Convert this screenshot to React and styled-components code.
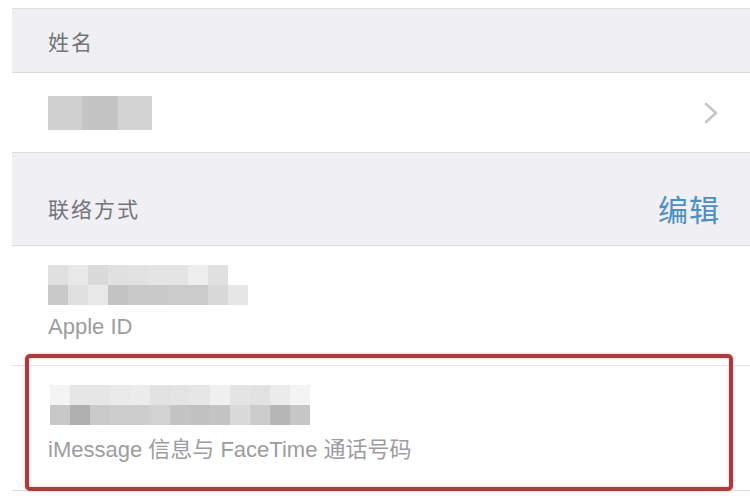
import styled, { createGlobalStyle } from 'styled-components'

const GlobalStyle = createGlobalStyle`
  html, body {
    margin: 0;
    padding: 0;
    background: #ffffff;
    font-family: "Liberation Sans", "Noto Sans CJK SC", sans-serif;
  }
`

const Page = styled.div`
  position: relative;
  width: 750px;
  height: 500px;
  overflow: hidden;
  background: #ffffff;
  padding-top: 8px;
  box-sizing: border-box;
`

const List = styled.div`
  margin-left: 12px;
  display: flex;
  flex-direction: column;
  border-top: 1px solid #dedee2;
`

const SectionHeader = styled.div`
  height: ${({ $height }) => $height}px;
  background: #f0f0f4;
  border-bottom: 1px solid #dcdce0;
  display: flex;
  align-items: center;
  justify-content: space-between;
  padding: ${({ $padTop }) => $padTop || 0}px 30px 0 36px;
  box-sizing: border-box;
`

const HeaderTitle = styled.span`
  font-family: "Noto Sans CJK SC", sans-serif;
  font-size: 21px;
  color: #737378;
  letter-spacing: 2px;
`

const EditLink = styled.span`
  font-family: "Noto Sans CJK SC", sans-serif;
  font-size: 30px;
  color: #4a8fc6;
  letter-spacing: 1px;
`

const NameRow = styled.div`
  height: 80px;
  background: #ffffff;
  border-bottom: 1px solid #dcdce0;
  display: flex;
  align-items: center;
  justify-content: space-between;
  padding: 0 32px 0 36px;
  box-sizing: border-box;
`

const ContactRow = styled.div`
  height: ${({ $height }) => $height}px;
  background: #ffffff;
  border-bottom: 1px solid ${({ $line }) => $line || '#e4e4e8'};
  display: flex;
  flex-direction: column;
  padding: 19px 0 0 36px;
  box-sizing: border-box;
`

const Mosaic = styled.div`
  display: flex;
  flex-direction: column;
  filter: blur(0.7px);
`

const MosaicRow = styled.div`
  display: flex;
  margin-left: ${({ $offset }) => $offset || 0}px;
  filter: ${({ $soft }) => ($soft ? 'blur(0.7px)' : 'none')};
`

const Tile = styled.div`
  width: ${({ $w }) => $w}px;
  height: ${({ $h }) => $h}px;
  background: ${({ $color }) => $color};
`

const SubLabel = styled.span`
  margin-top: ${({ $gap }) => $gap}px;
  font-family: "Liberation Sans", "Noto Sans CJK SC", sans-serif;
  font-size: 22px;
  line-height: 24px;
  color: #9c9ca0;
`

const BottomBand = styled.div`
  flex: 1;
  height: 20px;
  background: #f0f0f4;
`

const Highlight = styled.div`
  position: absolute;
  left: 25px;
  top: 354px;
  width: 708px;
  height: 137px;
  box-sizing: border-box;
  border: 4px solid #a83b3b;
  border-radius: 5px;
  box-shadow: 0 0 3px rgba(240, 120, 120, 0.6), inset 0 0 3px rgba(240, 120, 120, 0.5);
  pointer-events: none;
`

const nameTiles = [
  { w: 34, c: '#d0d0d0' },
  { w: 36, c: '#c4c4c4' },
  { w: 34, c: '#d3d3d3' },
]

const appleTop = ['#e0e0e0', '#e8e8e8', '#dadada', '#e0e0e0', '#e2e2e2', '#e4e4e4', '#e4e4e4', '#eeeeee', '#e0e0e0']
const appleBottom = ['#c9c9c9', '#e0e0e0', '#e8e8e8', '#c4c4c4', '#c9c9c9', '#c9c9c9', '#cbcbcb', '#cbcbcb', '#d8d8d8', '#e6e6e6']

const msgTop = ['#f4f4f4', '#e6e6e6', '#e6e6e6', '#eaeaea', '#ececec', '#e2e2e2', '#e4e4e4', '#e6e6e6', '#f0f0f0', '#e4e4e4', '#e2e2e2', '#ebebeb', '#f4f4f4']
const msgBottom = ['#c8c8c8', '#b0b0b0', '#cacaca', '#cdcdcd', '#cdcdcd', '#d2d2d2', '#c4c4c4', '#c0c0c0', '#c4c4c4', '#dadada', '#cccccc', '#b6b6b6', '#c6c6c6']

function Chevron() {
  return (
    <svg width="14" height="22" viewBox="0 0 14 22">
      <path d="M2 2 L12 11 L2 20" fill="none" stroke="#c5c5ca" strokeWidth="2.6" strokeLinecap="round" strokeLinejoin="round" />
    </svg>
  )
}

function TileRow({ colors, w, h, offset }) {
  return (
    <MosaicRow $offset={offset}>
      {colors.map((c, i) => (
        <Tile key={i} $w={w} $h={h} $color={c} />
      ))}
    </MosaicRow>
  )
}

export default function App() {
  return (
    <Page>
      <GlobalStyle />
      <List>
        <SectionHeader $height={64}>
          <HeaderTitle>姓名</HeaderTitle>
        </SectionHeader>

        <NameRow>
          <MosaicRow $soft>
            {nameTiles.map((t, i) => (
              <Tile key={i} $w={t.w} $h={34} $color={t.c} />
            ))}
          </MosaicRow>
          <Chevron />
        </NameRow>

        <SectionHeader $height={93} $padTop={18}>
          <HeaderTitle>联络方式</HeaderTitle>
          <EditLink>编辑</EditLink>
        </SectionHeader>

        <ContactRow $height={120}>
          <Mosaic>
            <TileRow colors={appleTop} w={20} h={20} />
            <TileRow colors={appleBottom} w={20} h={20} />
          </Mosaic>
          <SubLabel $gap={10}>Apple ID</SubLabel>
        </ContactRow>

        <ContactRow $height={125} $line="#dcdce0">
          <Mosaic>
            <TileRow colors={msgTop} w={20} h={20} offset={2} />
            <TileRow colors={msgBottom} w={20} h={20} offset={2} />
          </Mosaic>
          <SubLabel $gap={13}>iMessage 信息与 FaceTime 通话号码</SubLabel>
        </ContactRow>

        <BottomBand />
      </List>
      <Highlight />
    </Page>
  )
}
